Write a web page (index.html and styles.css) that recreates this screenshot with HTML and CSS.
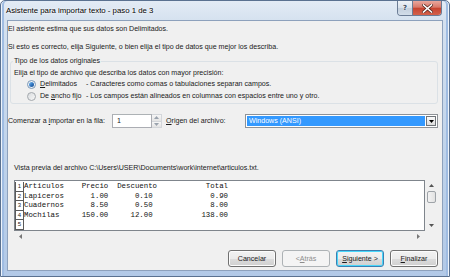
FILE: index.html
```html
<!DOCTYPE html>
<html lang="es">
<head>
<meta charset="utf-8">
<title>Asistente para importar texto</title>
<link rel="stylesheet" href="styles.css">
</head>
<body>
<div class="window">
  <div class="titlebar">
    <span class="title">Asistente para importar texto - paso 1 de 3</span>
    <div class="caption-btns">
      <span class="cbtn help">?</span>
      <span class="cbtn close">
        <svg width="11" height="9" viewBox="0 0 11 9"><path d="M1.5 1 L9.5 8 M9.5 1 L1.5 8" stroke="#5a2a22" stroke-width="3" stroke-linecap="square"/><path d="M1.5 1 L9.5 8 M9.5 1 L1.5 8" stroke="#ffffff" stroke-width="1.6" stroke-linecap="square"/></svg>
      </span>
    </div>
  </div>
  <div class="client">
    <p class="line l1">El asistente estima que sus datos son Delimitados.</p>
    <p class="line l2">Si esto es correcto, elija Siguiente, o bien elija el tipo de datos que mejor los describa.</p>
    <fieldset class="group">
      <legend>Tipo de los datos originales</legend>
      <p class="hint">Elija el tipo de archivo que describa los datos con mayor precisión:</p>
      <div class="radio-row">
        <span class="radio on"><span class="dot"></span></span>
        <span class="rlabel"><u>D</u>elimitados</span>
        <span class="rdesc">- Caracteres como comas o tabulaciones separan campos.</span>
      </div>
      <div class="radio-row">
        <span class="radio"></span>
        <span class="rlabel">De <u>a</u>ncho fijo</span>
        <span class="rdesc">- Los campos están alineados en columnas con espacios entre uno y otro.</span>
      </div>
    </fieldset>
    <div class="start-row">
      <span class="start-label">Comenzar a <u>i</u>mportar en la fila:</span>
      <span class="spin-input">1</span>
      <span class="spinner">
        <span class="spin-btn"><svg width="5" height="3" viewBox="0 0 5 3"><polygon points="0,3 5,3 2.5,0" fill="#9aa3ad"/></svg></span>
        <span class="spin-btn"><svg width="5" height="3" viewBox="0 0 5 3"><polygon points="0,0 5,0 2.5,3" fill="#9aa3ad"/></svg></span>
      </span>
      <span class="origin-label"><u>O</u>rigen del archivo:</span>
      <span class="combo">
        <span class="combo-value">Windows (ANSI)</span>
        <span class="combo-btn"><svg width="5" height="3" viewBox="0 0 5 3"><polygon points="0,0 5,0 2.5,3" fill="#000"/></svg></span>
      </span>
    </div>
    <p class="preview-label">Vista previa del archivo C:\Users\USER\Documents\work\internet\articulos.txt.</p>
    <div class="preview">
      <div class="preview-main">
        <div class="data">
          <div class="rownums">
            <span class="rn">1</span>
            <span class="rn">2</span>
            <span class="rn">3</span>
            <span class="rn">4</span>
            <span class="rn">5</span>
          </div>
<pre class="text">Articulos    Precio  Descuento           Total
Lapiceros      1.00      0.10             0.90
Cuadernos      8.50      0.50             8.00
Mochilas     150.00     12.00           138.00
</pre>
        </div>
        <div class="vscroll">
          <span class="sarrow"><svg width="5" height="3" viewBox="0 0 5 3"><polygon points="0,3 5,3 2.5,0" fill="#555"/></svg></span>
          <span class="thumb"></span>
          <span class="vspace"></span>
          <span class="sarrow"><svg width="5" height="3" viewBox="0 0 5 3"><polygon points="0,0 5,0 2.5,3" fill="#555"/></svg></span>
        </div>
      </div>
      <div class="hscroll">
        <span class="harrow"><svg width="3" height="5" viewBox="0 0 3 5"><polygon points="3,0 3,5 0,2.5" fill="#777"/></svg></span>
        <span class="harrow"><svg width="3" height="5" viewBox="0 0 3 5"><polygon points="0,0 0,5 3,2.5" fill="#777"/></svg></span>
      </div>
    </div>
    <div class="buttons">
      <span class="btn">Cancelar</span>
      <span class="btn disabled">&lt; <u>A</u>trás</span>
      <span class="btn default"><u>S</u>iguiente &gt;</span>
      <span class="btn"><u>F</u>inalizar</span>
    </div>
  </div>
</div>
</body>
</html>
```
FILE: styles.css
```css
* { box-sizing: border-box; }
html, body { margin: 0; padding: 0; }
body {
  width: 450px;
  height: 277px;
  overflow: hidden;
  background: #fff;
  font-family: "Liberation Sans", Arial, sans-serif;
  font-size: 7.1px;
  color: #1a1a1a;
}
u { text-decoration: underline; text-underline-offset: 1px; }

.window {
  width: 450px;
  height: 277px;
  display: flex;
  flex-direction: column;
  padding: 0 6px 5px 6px;
  border: 1px solid #5a7190;
  border-radius: 5px 5px 0 0;
  background: linear-gradient(to bottom, #e3ebf5 0px, #d5e1ef 20px, #bed2ea 60%, #b2c9e7 100%);
  box-shadow: inset 1px 0 0 #eef4fb, inset -1px 0 0 #eef4fb, inset 3px 0 0 #9fbce2, inset -3px 0 0 #9fbce2;
}

.titlebar {
  height: 19px;
  margin: 0 -6px;
  padding: 0 7px 0 5px;
  display: flex;
  align-items: flex-start;
}
.title {
  font-size: 7.8px;
  line-height: 19px;
  color: #000;
  text-shadow: 0 0 3px #fff, 0 0 2px #fff;
}
.caption-btns {
  margin-left: auto;
  display: flex;
  height: 15px;
  border: 1px solid #6b7c95;
  border-top: none;
  border-radius: 0 0 4px 4px;
  overflow: hidden;
}
.cbtn {
  height: 14px;
  display: flex;
  align-items: center;
  justify-content: center;
}
.help {
  width: 15px;
  font-family: "DejaVu Sans", sans-serif;
  font-weight: bold;
  font-size: 7px;
  color: #3c4c60;
  text-shadow: 0 0 2px #fff;
  background: linear-gradient(to bottom, #eef2f7 0%, #d8e1eb 50%, #c3cfdd 51%, #d2dde9 100%);
  border-right: 1px solid #6b7c95;
}
.close {
  width: 28px;
  background: linear-gradient(to bottom, #e9a79d 0%, #d9796a 45%, #c7432f 50%, #d2614b 100%);
}

.client {
  flex: 1;
  background: #f0f0f0;
  border: 1px solid #8da1bc;
  display: flex;
  flex-direction: column;
}

.line {
  margin: 0;
  line-height: 12px;
  white-space: nowrap;
}
.l1 { margin-top: 2px; }
.l2 { margin-top: 6px; }

.group {
  margin: 3px 4px 0 2px;
  padding: 0 3px 1px 3px;
  border: 1px solid #dbe1e6;
  border-radius: 3px;
  min-width: 0;
}
.group legend {
  padding: 0 1px;
  margin-left: -1px;
  line-height: 10px;
  font-size: 7.1px;
}
.hint {
  margin: 2px 0 0 0;
  line-height: 10px;
  white-space: nowrap;
}
.radio-row {
  height: 12px;
  display: flex;
  align-items: center;
  padding-left: 13px;
  white-space: nowrap;
}
.radio {
  width: 9px;
  height: 9px;
  border-radius: 50%;
  border: 1px solid #a3a8ad;
  background: linear-gradient(135deg, #d9dcdf, #f7f7f7);
  flex: none;
  display: flex;
  align-items: center;
  justify-content: center;
}
.radio.on {
  border-color: #7c98b6;
  background: #eef2f6;
}
.dot {
  width: 5px;
  height: 5px;
  border-radius: 50%;
  background: linear-gradient(135deg, #7fc0f2 0%, #2d72be 55%, #1a4e8c 100%);
}
.rlabel {
  margin-left: 4px;
  width: 46px;
  flex: none;
}
.rdesc { flex: none; }

.start-row {
  margin-top: 10px;
  height: 14px;
  display: flex;
  align-items: stretch;
  white-space: nowrap;
}
.start-label {
  width: 104px;
  flex: none;
  line-height: 14px;
}
.spin-input {
  width: 40px;
  flex: none;
  background: #fff;
  border: 1px solid #abadb3;
  border-top-color: #adb2b5;
  padding-left: 4px;
  line-height: 12px;
}
.spinner {
  width: 10px;
  flex: none;
  display: flex;
  flex-direction: column;
  border: 1px solid #d3d6da;
  border-left: none;
  background: #f1f1f1;
}
.spin-btn {
  flex: 1;
  display: flex;
  align-items: center;
  justify-content: center;
  background: linear-gradient(to bottom, #f6f6f6, #e4e4e4);
}
.spin-btn + .spin-btn { border-top: 1px solid #d3d6da; }
.origin-label {
  margin-left: 4px;
  width: 79px;
  flex: none;
  line-height: 14px;
}
.combo {
  width: 193px;
  flex: none;
  display: flex;
  border: 1px solid #8e9297;
  background: #fff;
  padding: 1px;
}
.combo-value {
  flex: 1;
  background: #3399ff;
  color: #fff;
  line-height: 10px;
  padding-left: 2px;
  margin-right: 1px;
}
.combo-btn {
  width: 10px;
  flex: none;
  display: flex;
  align-items: center;
  justify-content: center;
  border: 1px solid #6f7479;
  background: linear-gradient(to bottom, #fafafa, #dcdcdc);
}

.preview-label {
  margin: 35px 0 0 6px;
  line-height: 10px;
  white-space: nowrap;
}

.preview {
  margin: 7px 0 0 6px;
  width: 423px;
  display: flex;
  flex-direction: column;
}
.preview-main {
  height: 51px;
  display: flex;
}
.data {
  flex: 1;
  background: #fff;
  border: 1px solid #7f858c;
  display: flex;
  align-items: flex-start;
  padding-top: 1px;
  overflow: hidden;
}
.rownums {
  width: 9px;
  flex: none;
  display: flex;
  flex-direction: column;
  border-left: 1px solid #5a5a5a;
}
.rn {
  height: 9.5px;
  line-height: 8.5px;
  font-size: 6px;
  text-align: center;
  border-right: 1px solid #5a5a5a;
  border-bottom: 1px solid #5a5a5a;
  color: #222;
}
.text {
  margin: 0;
  font-family: "Liberation Mono", "Courier New", monospace;
  font-size: 7.4px;
  line-height: 9.5px;
  color: #111;
}
.vscroll {
  width: 12px;
  flex: none;
  display: flex;
  flex-direction: column;
  align-items: center;
  padding: 2px 0 3px;
}
.sarrow {
  height: 6px;
  display: flex;
  align-items: center;
  justify-content: center;
}
.thumb {
  margin-top: 3px;
  width: 9px;
  height: 12px;
  border: 1px solid #9ea3a8;
  border-radius: 2px;
  background: linear-gradient(to right, #f3f3f3, #e2e2e2);
}
.vspace { flex: 1; }
.hscroll {
  width: 411px;
  height: 11px;
  display: flex;
  align-items: center;
  justify-content: space-between;
  padding: 0 5px 0 5px;
}
.harrow { display: flex; }

.buttons {
  margin: 8px 4px 0 0;
  display: flex;
  justify-content: flex-end;
  gap: 6px;
}
.btn {
  width: 48px;
  height: 17px;
  display: flex;
  align-items: center;
  justify-content: center;
  border: 1px solid #707070;
  border-radius: 3px;
  background: linear-gradient(to bottom, #f2f2f2 0%, #ebebeb 50%, #dddddd 51%, #cfcfcf 100%);
  box-shadow: inset 0 0 0 1px #fcfcfc;
  white-space: nowrap;
}
.btn.disabled {
  color: #8d8d8d;
  border-color: #adb2b5;
  background: #f4f4f4;
  box-shadow: none;
}
.btn.default {
  border-color: #3c7fb1;
  box-shadow: inset 0 0 0 1px #48d7fb;
}
```
